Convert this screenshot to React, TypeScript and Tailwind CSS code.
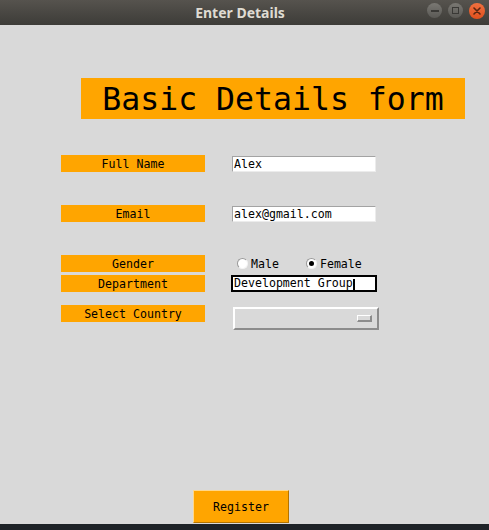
import React from 'react';

const mono = { fontFamily: '"DejaVu Sans Mono", "Liberation Mono", monospace' };

const Label = ({ text }: { text: string }) => (
  <div className="w-[144px] h-[17px] bg-[#ffa500] flex items-center justify-center pt-[2px] text-[11.6px] text-black leading-none">
    {text}
  </div>
);

const Entry = ({ value }: { value: string }) => (
  <div className="w-[144px] h-[16px] bg-white border border-t-[#a3a3a3] border-l-[#a3a3a3] border-b-[#ececec] border-r-[#ececec] flex items-center pt-[2px] px-[1px] text-[11.6px] leading-none text-black">
    {value}
  </div>
);

const Radio = ({ label, checked }: { label: string; checked?: boolean }) => (
  <div className="flex items-center gap-[3px] text-[11.6px] leading-none">
    <span className="w-[11px] h-[11px] rounded-full bg-white border border-t-[#9a9a9a] border-l-[#9a9a9a] border-b-[#f4f4f4] border-r-[#f4f4f4] flex items-center justify-center">
      {checked && <span className="w-[5px] h-[5px] rounded-full bg-black" />}
    </span>
    <span className="pt-[2px]">{label}</span>
  </div>
);

const App = () => {
  return (
    <div className="w-[489px] h-[530px] flex flex-col bg-[#d9d9d9] overflow-hidden" style={mono}>
      {/* title bar */}
      <div className="h-[25px] relative flex items-center justify-center bg-gradient-to-b from-[#56534e] to-[#3d3c38]">
        <span
          className="text-[14px] font-bold text-[#dfdbd2] mr-[9px]"
          style={{ fontFamily: '"Noto Sans", "DejaVu Sans", sans-serif' }}
        >
          Enter Details
        </span>
        <div className="absolute right-[4px] top-[3px] flex gap-[6px]">
          <span className="w-[15px] h-[15px] rounded-full bg-gradient-to-b from-[#7a7873] to-[#5a5955] flex items-center justify-center">
            <span className="w-[8px] h-[2px] bg-[#3a3936]" />
          </span>
          <span className="w-[15px] h-[15px] rounded-full bg-gradient-to-b from-[#7a7873] to-[#5a5955] flex items-center justify-center">
            <span className="w-[7px] h-[7px] border border-[#3a3936]" />
          </span>
          <span className="w-[16px] h-[16px] -mt-[0.5px] rounded-full bg-gradient-to-b from-[#f0703f] to-[#e0501c] flex items-center justify-center">
            <svg width="8" height="8" viewBox="0 0 8 8">
              <path d="M1 1 L7 7 M7 1 L1 7" stroke="#5a2510" strokeWidth="1.6" strokeLinecap="round" />
            </svg>
          </span>
        </div>
      </div>

      {/* form */}
      <div className="h-[499px] flex flex-col">
        <div className="mt-[53px] ml-[81px] w-[384px] h-[41px] bg-[#ffa500] flex items-center justify-center pt-[2px] text-[31.5px] leading-none text-black">
          Basic Details form
        </div>

        <div className="mt-[36px] ml-[61px] flex items-center gap-[27px] h-[17px]">
          <Label text="Full Name" />
          <Entry value="Alex" />
        </div>

        <div className="mt-[33px] ml-[61px] flex items-center gap-[27px] h-[17px]">
          <Label text="Email" />
          <Entry value="alex@gmail.com" />
        </div>

        <div className="mt-[33px] ml-[61px] flex items-center h-[17px]">
          <Label text="Gender" />
          <div className="ml-[32px] flex items-center gap-[27px]">
            <Radio label="Male" />
            <Radio label="Female" checked />
          </div>
        </div>

        <div className="mt-[3px] ml-[61px] flex items-center gap-[26px] h-[17px]">
          <Label text="Department" />
          <div className="w-[146px] h-[17px] bg-white border-2 border-black flex items-center pt-[1px] pl-[1px] text-[11.6px] leading-none text-black">
            Development Group
            <span className="w-[2px] h-[11px] bg-black" />
          </div>
        </div>

        <div className="mt-[13px] ml-[61px] flex items-start gap-[28px]">
          <Label text="Select Country" />
          <div className="mt-[2px] w-[146px] h-[23px] bg-[#d9d9d9] border-2 border-t-white border-l-white border-b-[#8c8c8c] border-r-[#8c8c8c] flex items-center justify-end pr-[5px]">
            <span className="w-[15px] h-[7px] border border-t-white border-l-white border-b-[#8c8c8c] border-r-[#8c8c8c] border-b-2 border-r-2" />
          </div>
        </div>

        <div className="mt-[160px] ml-[193px] w-[96px] h-[33px] bg-[#ffa500] border border-t-[#ffd78a] border-l-[#ffd78a] border-b-[#b47400] border-r-[#b47400] flex items-center justify-center pt-[3px] text-[11.6px] leading-none text-black">
          Register
        </div>
      </div>

      <div className="h-[6px] bg-[#1e2328]" />
    </div>
  );
};

export default App;
